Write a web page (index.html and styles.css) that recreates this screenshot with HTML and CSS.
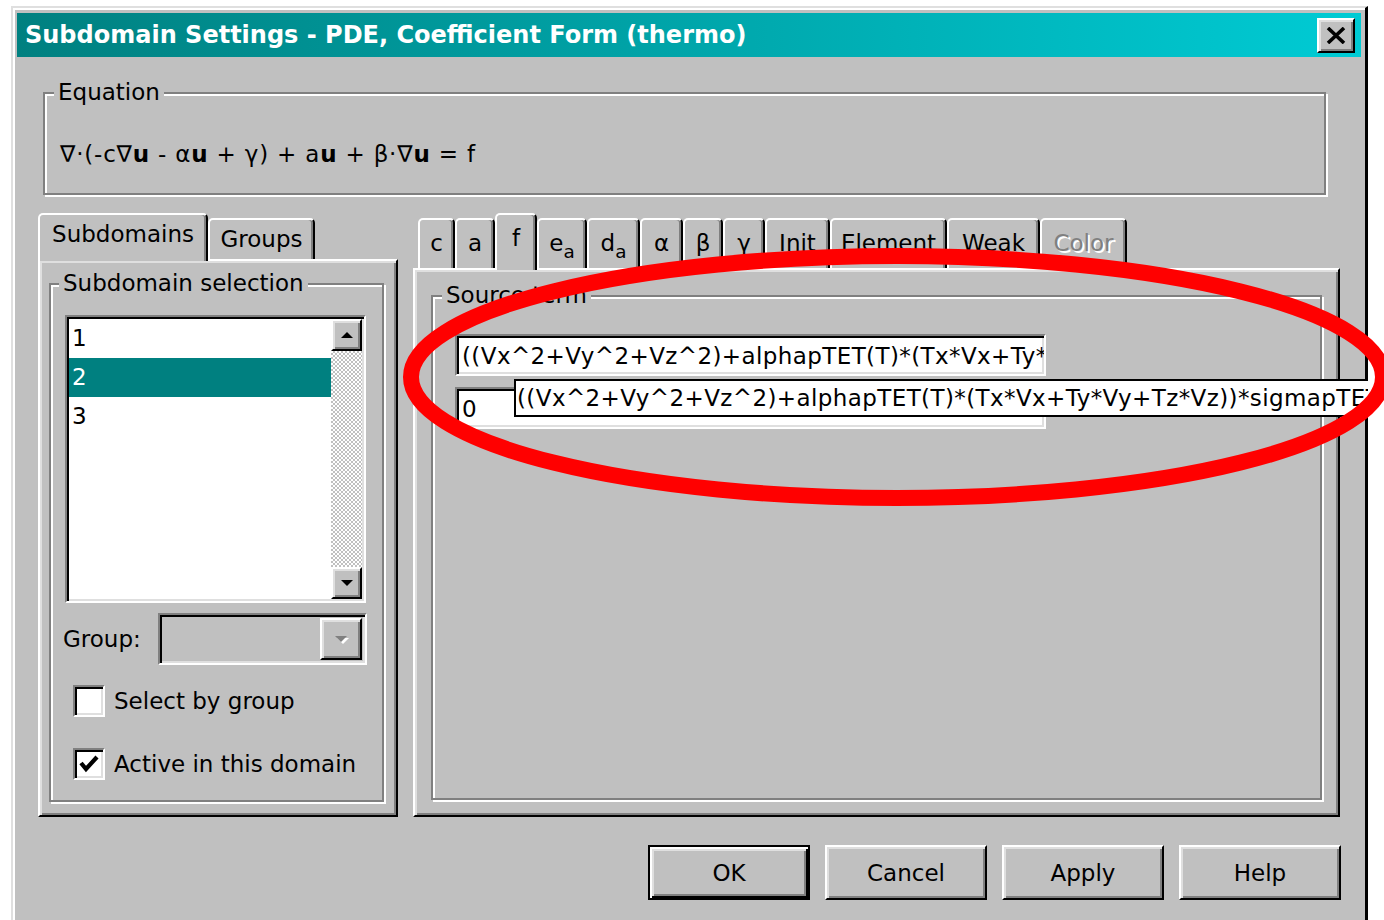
FILE: index.html
```html
<!DOCTYPE html>
<html lang="en">
<head>
<meta charset="utf-8">
<title>Subdomain Settings - PDE, Coefficient Form (thermo)</title>
<link rel="stylesheet" href="styles.css">
</head>
<body>
<div class="window">
  <div class="titlebar">
    <span class="title">Subdomain Settings - PDE, Coefficient Form (thermo)</span>
    <div class="close-btn">
      <svg width="20" height="17" viewBox="0 0 20 17"><path d="M2 1 L18 16 M18 1 L2 16" stroke="#000" stroke-width="3.6" fill="none"/></svg>
    </div>
  </div>

  <div class="client">
    <div class="groupbox eq-box">
      <div class="legend">Equation</div>
      <div class="equation">∇·(-c∇<b>u</b> - α<b>u</b> + γ) + a<b>u</b> + β·∇<b>u</b> = f</div>
    </div>

    <div class="tab-row">
      <div class="tabctl tabctl-side">
        <div class="tabstrip strip-side">
          <div class="tab active w-subdomains">Subdomains</div>
          <div class="tab w-groups">Groups</div>
        </div>
        <div class="tabpanel panel-side">
          <div class="groupbox sel-box">
            <div class="legend">Subdomain selection</div>
            <div class="listbox">
              <ul class="list-items">
                <li>1</li>
                <li class="selected">2</li>
                <li>3</li>
              </ul>
              <div class="vscroll">
                <div class="scroll-btn"><span class="arrow-up"></span></div>
                <div class="scroll-track"></div>
                <div class="scroll-btn"><span class="arrow-down"></span></div>
              </div>
            </div>
            <div class="group-row">
              <span class="group-label">Group:</span>
              <div class="combo">
                <div class="combo-btn"><span class="arrow-down disabled"></span></div>
              </div>
            </div>
            <div class="check-row first">
              <span class="checkbox"></span>
              <span>Select by group</span>
            </div>
            <div class="check-row">
              <span class="checkbox">
                <svg width="24" height="24" viewBox="0 0 24 24"><polyline points="4,11 9,17 20,5" fill="none" stroke="#000" stroke-width="4.2"/></svg>
              </span>
              <span>Active in this domain</span>
            </div>
          </div>
        </div>
      </div>

      <div class="tabctl tabctl-main">
        <div class="tabstrip strip-main">
          <div class="tab w-c">c</div>
          <div class="tab w-a">a</div>
          <div class="tab active w-f">f</div>
          <div class="tab w-ea">e<sub>a</sub></div>
          <div class="tab w-da">d<sub>a</sub></div>
          <div class="tab w-alpha">α</div>
          <div class="tab w-beta">β</div>
          <div class="tab w-gamma">γ</div>
          <div class="tab w-init">Init</div>
          <div class="tab w-element">Element</div>
          <div class="tab w-weak">Weak</div>
          <div class="tab w-color disabled">Color</div>
        </div>
        <div class="tabpanel panel-main">
          <div class="groupbox src-box">
            <div class="legend">Source term</div>
            <div class="field expr">((Vx^2+Vy^2+Vz^2)+alphapTET(T)*(Tx*Vx+Ty*Vy+Tz*Vz))*sigmapTET(T)</div>
            <div class="field-wrap">
              <div class="field">0</div>
              <div class="tooltip expr">((Vx^2+Vy^2+Vz^2)+alphapTET(T)*(Tx*Vx+Ty*Vy+Tz*Vz))*sigmapTET(T)</div>
            </div>
          </div>
        </div>
      </div>
    </div>

    <div class="button-row">
      <div class="btn default">OK</div>
      <div class="btn">Cancel</div>
      <div class="btn">Apply</div>
      <div class="btn">Help</div>
    </div>
  </div>
</div>

<svg class="annotation" width="1384" height="920" viewBox="0 0 1384 920">
  <ellipse cx="897" cy="377" rx="486" ry="121" fill="none" stroke="#ff0000" stroke-width="16"/>
</svg>
</body>
</html>
```

FILE: styles.css
```css
* {
  box-sizing: border-box;
}

html, body {
  margin: 0;
  width: 1384px;
  height: 920px;
  overflow: hidden;
  background: #ffffff;
}

body {
  position: relative;
  font-family: "DejaVu Sans", "Liberation Sans", sans-serif;
  font-size: 23px;
  color: #000;
}

/* ---------- window frame ---------- */
.window {
  margin: 6px 0 0 11px;
  width: 1357px;
  height: 940px;
  background: #c0c0c0;
  border-left: 2px solid #dfdfdf;
  border-top: 2px solid #dfdfdf;
  border-right: 3px solid #000;
  box-shadow: inset 2px 2px #fff;
  padding: 5px 4px 0 4px;
}

.titlebar {
  height: 44px;
  display: flex;
  align-items: center;
  justify-content: space-between;
  background: linear-gradient(90deg, #008080 0%, #00cbd4 100%);
}

.title {
  padding-left: 8px;
  color: #fff;
  font-weight: bold;
  font-size: 24px;
  white-space: nowrap;
}

.close-btn {
  width: 38px;
  height: 35px;
  margin-right: 6px;
  display: flex;
  align-items: center;
  justify-content: center;
  background: #c0c0c0;
  border: 2px solid;
  border-color: #fff #000 #000 #fff;
  box-shadow: inset 2px 2px #dfdfdf, inset -2px -2px #808080;
}

.client {
  padding: 0 21px;
}

/* ---------- etched group box ---------- */
.groupbox {
  border: 2px solid #808080;
  box-shadow: inset 2px 2px #fff, 2px 2px #fff;
}

.legend {
  width: fit-content;
  margin-top: -17px;
  padding: 0 4px;
  line-height: 30px;
  background: #c0c0c0;
  white-space: nowrap;
}

.eq-box {
  margin: 35px 14px 0 5px;
  height: 103px;
}

.eq-box .legend {
  margin-left: 9px;
}

.equation {
  margin-top: 32px;
  padding-left: 15px;
  line-height: 30px;
  letter-spacing: 0.8px;
  white-space: nowrap;
}

.equation b {
  font-weight: bold;
}

/* ---------- tab controls ---------- */
.tab-row {
  display: flex;
  gap: 15px;
  margin-top: 18px;
  height: 604px;
}

.tabctl {
  display: flex;
  flex-direction: column;
}

.tabctl-side {
  width: 360px;
}

.tabctl-main {
  flex: 1;
}

.tabstrip {
  display: flex;
  align-items: flex-end;
}

.strip-side {
  height: 46px;
}

.strip-main {
  height: 55px;
  padding-left: 5px;
}

.tab {
  background: #c0c0c0;
  border: 2px solid;
  border-bottom: none;
  border-color: #fff #000 transparent #fff;
  border-radius: 5px 5px 0 0;
  box-shadow: inset -2px 0 #808080;
  text-align: center;
  line-height: 30px;
  white-space: nowrap;
}

.strip-side .tab {
  height: 41px;
  padding-top: 4px;
}

.strip-side .tab.active {
  height: 48px;
}

.strip-main .tab {
  height: 50px;
  padding-top: 8px;
}

.strip-main .tab.active {
  height: 57px;
}

.tab.active {
  position: relative;
  z-index: 1;
  margin-bottom: -2px;
}

.tab sub {
  font-size: 0.8em;
  vertical-align: -7px;
  line-height: 0;
}

.tab.disabled {
  color: #808080;
  text-shadow: 2px 2px 0 #fff;
}

.w-subdomains { width: 170px; }
.w-groups { width: 107px; }
.w-c { width: 37px; }
.w-a { width: 40px; }
.w-f { width: 42px; }
.w-ea { width: 50px; }
.w-da { width: 53px; }
.w-alpha { width: 43px; }
.w-beta { width: 40px; }
.w-gamma { width: 42px; }
.w-init { width: 65px; }
.w-element { width: 117px; }
.w-weak { width: 93px; }
.w-color { width: 87px; }

.tabpanel {
  flex: 1;
  display: flex;
  background: #c0c0c0;
  border: 2px solid;
  border-color: #fff #000 #000 #fff;
  box-shadow: inset 2px 2px #dfdfdf, inset -2px -2px #808080;
}

.panel-side {
  padding: 22px 12px 13px 9px;
}

.panel-main {
  padding: 25px 16px 15px 16px;
}

.sel-box,
.src-box {
  flex: 1;
  display: flex;
  flex-direction: column;
}

.sel-box .legend {
  margin-left: 8px;
}

.src-box .legend {
  margin-left: 9px;
}

/* ---------- sunken controls ---------- */
.listbox,
.combo,
.checkbox,
.field {
  border: 2px solid;
  border-color: #808080 #fff #fff #808080;
  box-shadow: inset 2px 2px #000, inset -2px -2px #dfdfdf;
}

.listbox {
  margin: 17px 16px 0 14px;
  height: 288px;
  display: flex;
  background: #fff;
  padding: 2px;
}

.list-items {
  list-style: none;
  margin: 0;
  padding: 0;
  flex: 1;
}

.list-items li {
  height: 39px;
  line-height: 39px;
  padding-left: 3px;
}

.list-items li.selected {
  background: #008080;
  color: #fff;
}

.vscroll {
  width: 31px;
  display: flex;
  flex-direction: column;
}

.scroll-btn,
.combo-btn,
.btn {
  background: #c0c0c0;
  border: 2px solid;
  border-color: #fff #000 #000 #fff;
  box-shadow: inset 2px 2px #dfdfdf, inset -2px -2px #808080;
}

.scroll-btn {
  height: 32px;
  display: flex;
  align-items: center;
  justify-content: center;
}

.scroll-track {
  flex: 1;
  background: repeating-conic-gradient(#c0c0c0 0 25%, #fff 0 50%) 0 0 / 4px 4px;
}

.arrow-up {
  width: 0;
  height: 0;
  border-left: 6px solid transparent;
  border-right: 6px solid transparent;
  border-bottom: 6px solid #000;
}

.arrow-down {
  width: 0;
  height: 0;
  border-left: 6px solid transparent;
  border-right: 6px solid transparent;
  border-top: 6px solid #000;
}

.arrow-down.disabled {
  border-top-color: #808080;
  filter: drop-shadow(2px 2px 0 #fff);
}

.group-row {
  display: flex;
  align-items: center;
  justify-content: space-between;
  margin: 10px 15px 0 12px;
  height: 52px;
}

.combo {
  width: 209px;
  height: 52px;
  background: #c0c0c0;
  display: flex;
  justify-content: flex-end;
  padding: 3px;
}

.combo-btn {
  width: 42px;
  height: 42px;
  display: flex;
  align-items: center;
  justify-content: center;
}

.check-row {
  display: flex;
  align-items: center;
  gap: 9px;
  margin: 31px 0 0 22px;
  height: 32px;
  white-space: nowrap;
}

.check-row.first {
  margin-top: 20px;
}

.checkbox {
  width: 32px;
  height: 32px;
  background: #fff;
  display: flex;
  align-items: center;
  justify-content: center;
}

/* ---------- source term fields ---------- */
.field {
  width: 591px;
  height: 42px;
  background: #fff;
  padding: 2px 3px 0 5px;
  line-height: 36px;
  white-space: nowrap;
  overflow: hidden;
}

.expr {
  letter-spacing: 0.4px;
}

.src-box > .field {
  margin: 24px 0 0 22px;
}

.field-wrap {
  position: relative;
  margin: 11px 0 0 22px;
}

.tooltip {
  position: absolute;
  left: 59px;
  top: -8px;
  width: 854px;
  height: 38px;
  background: #fff;
  border: 2px solid #000;
  border-right: none;
  padding-left: 1px;
  line-height: 34px;
  white-space: nowrap;
  overflow: hidden;
  z-index: 2;
}

/* ---------- dialog buttons ---------- */
.button-row {
  display: flex;
  justify-content: flex-end;
  gap: 15px;
  margin: 28px -1px 0 0;
}

.btn {
  width: 162px;
  height: 55px;
  display: flex;
  align-items: center;
  justify-content: center;
}

.btn.default {
  border-color: #000;
  box-shadow: inset 2px 2px #fff, inset -2px -2px #000, inset 4px 4px #dfdfdf, inset -4px -4px #808080;
}

/* ---------- red mark drawn over the dialog ---------- */
.annotation {
  position: absolute;
  left: 0;
  top: 0;
  pointer-events: none;
  z-index: 5;
}
```
